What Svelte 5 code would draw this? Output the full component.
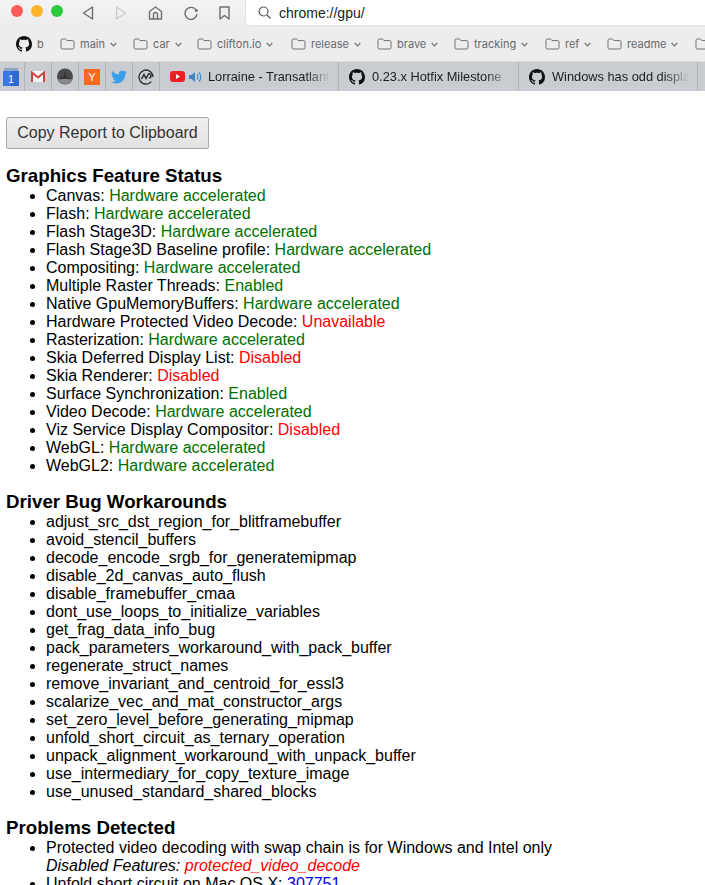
<script>
  const github = 'M8 0C3.58 0 0 3.58 0 8c0 3.54 2.29 6.53 5.47 7.59.4.07.55-.17.55-.38 0-.19-.01-.82-.01-1.49-2.01.37-2.53-.49-2.69-.94-.09-.23-.48-.94-.82-1.13-.28-.15-.68-.52-.01-.53.63-.01 1.08.58 1.23.82.72 1.21 1.87.87 2.33.66.07-.52.28-.87.51-1.07-1.78-.2-3.64-.89-3.64-3.95 0-.87.31-1.59.82-2.15-.08-.2-.36-1.02.08-2.12 0 0 .67-.21 2.2.82.64-.18 1.32-.27 2-.27.68 0 1.36.09 2 .27 1.53-1.04 2.2-.82 2.2-.82.44 1.1.16 1.92.08 2.12.51.56.82 1.27.82 2.15 0 3.07-1.87 3.75-3.65 3.95.29.25.54.73.54 1.48 0 1.07-.01 1.93-.01 2.2 0 .21.15.46.55.38A8.013 8.013 0 0016 8c0-4.42-3.58-8-8-8z';

  // width is the slot from one folder icon to the next one
  const folders = [
    { name: 'main', width: 73 },
    { name: 'car', width: 64 },
    { name: 'clifton.io', width: 94 },
    { name: 'release', width: 86 },
    { name: 'brave', width: 77 },
    { name: 'tracking', width: 91 },
    { name: 'ref', width: 62 },
    { name: 'readme', width: 88 }
  ];

  const features = [
    ['Canvas', 'Hardware accelerated', 'ok'],
    ['Flash', 'Hardware accelerated', 'ok'],
    ['Flash Stage3D', 'Hardware accelerated', 'ok'],
    ['Flash Stage3D Baseline profile', 'Hardware accelerated', 'ok'],
    ['Compositing', 'Hardware accelerated', 'ok'],
    ['Multiple Raster Threads', 'Enabled', 'ok'],
    ['Native GpuMemoryBuffers', 'Hardware accelerated', 'ok'],
    ['Hardware Protected Video Decode', 'Unavailable', 'off'],
    ['Rasterization', 'Hardware accelerated', 'ok'],
    ['Skia Deferred Display List', 'Disabled', 'off'],
    ['Skia Renderer', 'Disabled', 'off'],
    ['Surface Synchronization', 'Enabled', 'ok'],
    ['Video Decode', 'Hardware accelerated', 'ok'],
    ['Viz Service Display Compositor', 'Disabled', 'off'],
    ['WebGL', 'Hardware accelerated', 'ok'],
    ['WebGL2', 'Hardware accelerated', 'ok']
  ];

  const workarounds = [
    'adjust_src_dst_region_for_blitframebuffer',
    'avoid_stencil_buffers',
    'decode_encode_srgb_for_generatemipmap',
    'disable_2d_canvas_auto_flush',
    'disable_framebuffer_cmaa',
    'dont_use_loops_to_initialize_variables',
    'get_frag_data_info_bug',
    'pack_parameters_workaround_with_pack_buffer',
    'regenerate_struct_names',
    'remove_invariant_and_centroid_for_essl3',
    'scalarize_vec_and_mat_constructor_args',
    'set_zero_level_before_generating_mipmap',
    'unfold_short_circuit_as_ternary_operation',
    'unpack_alignment_workaround_with_unpack_buffer',
    'use_intermediary_for_copy_texture_image',
    'use_unused_standard_shared_blocks'
  ];
</script>

{#snippet octocat(size)}
  <svg class="cat" width={size} height={size} viewBox="0 0 16 16"><path d={github} fill="#111" /></svg>
{/snippet}

{#snippet folder()}
  <svg class="folder" width="15" height="12" viewBox="0 0 15 12">
    <path d="M1 2.2C1 1.4 1.5 1 2.2 1h3c.5 0 .8.2 1.1.6l.7 1h5.8c.7 0 1.2.5 1.2 1.2v6c0 .7-.5 1.2-1.2 1.2H2.2C1.5 11 1 10.500 1 9.800z" fill="none" stroke="#6f7276" stroke-width="1" />
  </svg>
{/snippet}

{#snippet chevron()}
  <svg class="chev" width="7" height="5" viewBox="0 0 7 5">
    <path d="M.7 1 3.500 3.800 6.300 1" fill="none" stroke="#6f7276" stroke-width="1.200" />
  </svg>
{/snippet}

<div class="window">
  <div class="toolbar">
    <div class="lights">
      <span class="light red"></span>
      <span class="light amber"></span>
      <span class="light green"></span>
    </div>
    <div class="nav">
      <svg width="12" height="14" viewBox="0 0 12 14"><path d="M10.500 1 1.500 7l9 6z" fill="none" stroke="#6d6f73" stroke-width="1.400" stroke-linejoin="round" /></svg>
      <svg width="12" height="14" viewBox="0 0 12 14"><path d="M1.500 1l9 6-9 6z" fill="none" stroke="#c9cbce" stroke-width="1.400" stroke-linejoin="round" /></svg>
      <svg width="15" height="14" viewBox="0 0 15 14"><path d="M1.500 5.500 7.500 1l6 4.500V13h-12zM5.500 13V8.500a2 2 0 0 1 4 0V13" fill="none" stroke="#6d6f73" stroke-width="1.400" stroke-linejoin="round" /></svg>
      <svg width="14" height="14" viewBox="0 0 14 14"><path d="M12.300 4.500A6 6 0 1 0 13 8" fill="none" stroke="#6d6f73" stroke-width="1.400" /><circle cx="12.300" cy="4.500" r="1.500" fill="#6d6f73" /></svg>
      <svg width="11" height="14" viewBox="0 0 11 14"><path d="M1 1h9v12L5.500 9.500 1 13z" fill="none" stroke="#6d6f73" stroke-width="1.400" stroke-linejoin="round" /></svg>
    </div>
    <div class="omnibox">
      <svg width="13" height="13" viewBox="0 0 13 13"><circle cx="5.500" cy="5.500" r="4.500" fill="none" stroke="#55585c" stroke-width="1.200" /><path d="M9 9l3.500 3.500" stroke="#55585c" stroke-width="1.300" /></svg>
      <span>chrome://gpu/</span>
    </div>
  </div>

  <div class="bookmarks">
    <span class="mark first">
      {@render octocat(16)}
      <span class="mark-label">b</span>
    </span>
    {#each folders as item}
      <span class="mark" style="width: {item.width}px">
        {@render folder()}
        <span class="mark-label">{item.name}</span>
        {@render chevron()}
      </span>
    {/each}
    <span class="mark">{@render folder()}</span>
  </div>

  <div class="tabs">
    <span class="pin cal">
      <svg width="16" height="18" viewBox="0 0 16 18">
        <rect x="1" width="14" height="4" fill="#8fa3c4" />
        <rect y="3" width="16" height="15" fill="#3b78e7" />
        <rect x="8" y="3" width="8" height="15" fill="#2f68d2" />
        <text x="8" y="14.500" text-anchor="middle" font-size="10" fill="#fff" font-family="Liberation Sans">1</text>
      </svg>
    </span>
    <span class="pin">
      <svg width="14" height="11" viewBox="0 0 14 11">
        <rect width="14" height="11" fill="#f4f4f4" />
        <path d="M1 11V1.500L7 6.500l6-5V11" fill="none" stroke="#d0433a" stroke-width="2" />
      </svg>
    </span>
    <span class="pin">
      <svg width="16" height="17" viewBox="0 0 16 16">
        <circle cx="8" cy="8" r="8" fill="#4a4a4c" />
        <path d="M.6 10.500h14.800a8 8 0 0 1-14.800 0z" fill="#8a8a8c" />
        <path d="M8 1.500 9 8l5.500 3.500L8 9.500l-6.500 2L7 8z" fill="#2b2b2d" />
      </svg>
    </span>
    <span class="pin">
      <span class="yc">Y</span>
    </span>
    <span class="pin">
      <svg width="16" height="16" viewBox="0 0 24 24"><path d="M23.953 4.570a10 10 0 0 1-2.825.775 4.958 4.958 0 0 0 2.163-2.723c-.951.555-2.005.959-3.127 1.184a4.920 4.920 0 0 0-8.384 4.482C7.690 8.095 4.067 6.130 1.640 3.162a4.822 4.822 0 0 0-.666 2.475c0 1.710.870 3.213 2.188 4.096a4.904 4.904 0 0 1-2.228-.616v.060a4.923 4.923 0 0 0 3.946 4.827 4.996 4.996 0 0 1-2.212.085 4.936 4.936 0 0 0 4.604 3.417 9.867 9.867 0 0 1-6.102 2.105c-.390 0-.779-.023-1.170-.067a13.995 13.995 0 0 0 7.557 2.209c9.053 0 13.998-7.496 13.998-13.985 0-.210 0-.420-.015-.630A9.935 9.935 0 0 0 24 4.590z" fill="#3a9fe8" /></svg>
    </span>
    <span class="pin">
      <svg width="16" height="16" viewBox="0 0 16 16">
        <path d="M13.300 12.600A7 7 0 1 1 15 8" fill="none" stroke="#26282b" stroke-width="1.300" />
        <path d="M3.500 10 6 5.500 8 9.500 10.500 5c1.500-.5 2.500.5 2.500 2s-1 2.200-2 1.500" fill="none" stroke="#26282b" stroke-width="1.500" />
      </svg>
    </span>
    <span class="tab" style="width: 179px">
      <svg class="yt" width="15" height="11" viewBox="0 0 15 11">
        <rect width="15" height="11" rx="3" fill="#f01d24" />
        <path d="M6 3l4 2.500L6 8z" fill="#fff" />
      </svg>
      <svg class="speaker" width="14" height="12" viewBox="0 0 14 12">
        <path d="M0 4h2.500L6 1v10L2.500 8H0z" fill="#3d86c6" />
        <path d="M8 3.500a3.500 3.500 0 0 1 0 5M10 1.500a6.500 6.500 0 0 1 0 9" fill="none" stroke="#3d86c6" stroke-width="1.100" />
      </svg>
      <span class="tab-title">Lorraine - Transatlantique</span>
    </span>
    <span class="tab" style="width: 180px">
      {@render octocat(16)}
      <span class="tab-title">0.23.x Hotfix Milestone</span>
    </span>
    <span class="tab" style="width: 179px">
      {@render octocat(16)}
      <span class="tab-title">Windows has odd display</span>
    </span>
  </div>

  <main class="page">
    <button class="copy">Copy Report to Clipboard</button>

    <h3>Graphics Feature Status</h3>
    <ul>
      {#each features as [name, value, state]}
        <li>{name}: <span class={state}>{value}</span></li>
      {/each}
    </ul>

    <h3>Driver Bug Workarounds</h3>
    <ul>
      {#each workarounds as w}
        <li>{w}</li>
      {/each}
    </ul>

    <h3>Problems Detected</h3>
    <ul>
      <li>
        Protected video decoding with swap chain is for Windows and Intel only<br />
        <i>Disabled Features: <span class="off">protected_video_decode</span></i>
      </li>
      <li>Unfold short circuit on Mac OS X: <span class="link">307751</span></li>
    </ul>
  </main>
</div>

<style>
  :global(body) {
    margin: 0;
    background: #fff;
  }

  .window {
    height: 885px;
    overflow: hidden;
    font-family: "Liberation Sans", Arial, sans-serif;
  }

  .toolbar {
    height: 27px;
    display: flex;
    align-items: center;
    padding-left: 11px;
    background: linear-gradient(#f3f3f3, #ececec);
  }

  .lights {
    display: flex;
    gap: 8px;
    margin-top: -5px;
  }

  .light {
    width: 12px;
    height: 12px;
    border-radius: 50%;
  }

  .red { background: #fb5b57; }
  .amber { background: #fdb52d; }
  .green { background: #2bc840; }

  .nav {
    display: flex;
    align-items: center;
    gap: 21px;
    margin-left: 19px;
    margin-top: -2px;
  }

  .omnibox {
    flex: 1;
    height: 26px;
    margin-left: 15px;
    margin-right: -4px;
    padding-left: 12px;
    display: flex;
    align-items: center;
    gap: 8px;
    box-sizing: border-box;
    align-self: flex-start;
    background: #fff;
    border-radius: 0 0 0 4px;
    border: 1px solid #e3e3e3;
    border-top: 0;
    font-size: 14px;
    color: #222;
  }

  .omnibox span {
    padding-top: 1px;
  }

  .bookmarks {
    height: 34px;
    display: flex;
    align-items: center;
    padding-left: 16px;
    white-space: nowrap;
    overflow: hidden;
    background: #ededed;
    font-family: Inter, "Liberation Sans", sans-serif;
    font-size: 11px;
    color: #66696d;
  }

  .mark {
    display: flex;
    align-items: center;
    flex: none;
  }

  .first {
    width: 44px;
  }

  .mark-label {
    margin-left: 5px;
  }

  .chev {
    margin-left: 5px;
  }

  .tabs {
    height: 30px;
    display: flex;
    align-items: stretch;
    background: #c9ccd1;
    border-top: 1px solid #dcdcdc;
    box-sizing: border-box;
    overflow: hidden;
  }

  .pin {
    flex: none;
    width: 27px;
    box-sizing: border-box;
    border-right: 1px solid #b2b4b8;
    display: flex;
    align-items: center;
    justify-content: center;
  }

  .cal {
    width: 25px;
    padding-right: 3px;
  }

  .yc {
    width: 16px;
    height: 16px;
    background: #f96a20;
    color: #fff;
    font-size: 11px;
    line-height: 16px;
    text-align: center;
  }

  .tab {
    flex: none;
    box-sizing: border-box;
    display: flex;
    align-items: center;
    gap: 7px;
    padding-left: 10px;
    padding-right: 8px;
    border-right: 1px solid #b2b4b8;
    font-size: 12.800px;
    color: #1c1c1c;
  }

  .cat,
  .yt {
    flex: none;
  }

  .speaker {
    flex: none;
    margin: 0 -2px 0 -3px;
  }

  .tab-title {
    flex: 1;
    overflow: hidden;
    white-space: nowrap;
    mask-image: linear-gradient(to left, transparent, #000 24px);
  }

  .page {
    padding: 26px 6px 0;
    color: #000;
    font-size: 16px;
    line-height: 18px;
  }

  .copy {
    display: block;
    width: 203px;
    height: 32px;
    padding: 0;
    border: 1px solid #a9a9a9;
    border-radius: 2px;
    background: linear-gradient(#f0f0f0, #e2e2e2);
    font: 16px "Liberation Sans", Arial, sans-serif;
    color: #333;
  }

  h3 {
    margin: 18px 0 2px;
    font-size: 18.720px;
    line-height: 18px;
    font-weight: 700;
  }

  ul {
    margin: 0;
    padding-left: 40px;
  }

  .ok { color: #007000; }
  .off { color: #f00; }
  .link { color: #00e; }
</style>
